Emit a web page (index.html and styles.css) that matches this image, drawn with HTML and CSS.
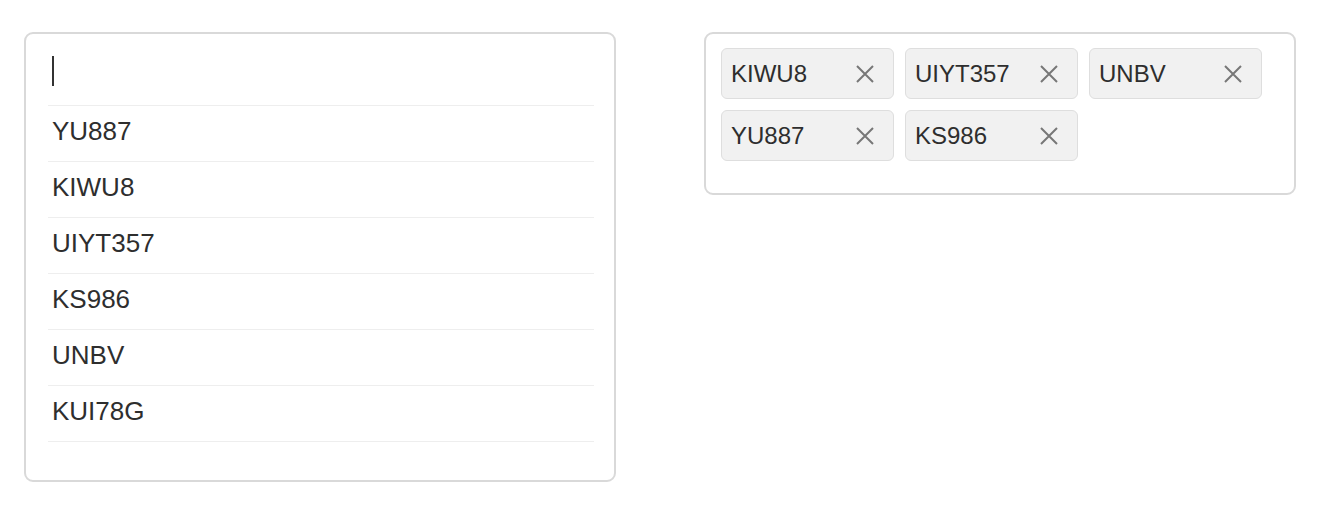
FILE: index.html
```html
<!DOCTYPE html>
<html>
<head>
<meta charset="utf-8">
<link rel="stylesheet" href="styles.css">
</head>
<body>
<div class="page">
  <div class="picker">
    <div class="search"><span class="caret"></span></div>
    <ul class="options">
      <li class="option">YU887</li>
      <li class="option">KIWU8</li>
      <li class="option">UIYT357</li>
      <li class="option">KS986</li>
      <li class="option">UNBV</li>
      <li class="option">KUI78G</li>
    </ul>
  </div>
  <div class="selected">
    <div class="tag"><span class="tag-label">KIWU8</span><span class="tag-close"><svg viewBox="0 0 20 20" width="20" height="20"><path d="M2 2 L18 18 M18 2 L2 18"/></svg></span></div>
    <div class="tag"><span class="tag-label">UIYT357</span><span class="tag-close"><svg viewBox="0 0 20 20" width="20" height="20"><path d="M2 2 L18 18 M18 2 L2 18"/></svg></span></div>
    <div class="tag"><span class="tag-label">UNBV</span><span class="tag-close"><svg viewBox="0 0 20 20" width="20" height="20"><path d="M2 2 L18 18 M18 2 L2 18"/></svg></span></div>
    <div class="tag"><span class="tag-label">YU887</span><span class="tag-close"><svg viewBox="0 0 20 20" width="20" height="20"><path d="M2 2 L18 18 M18 2 L2 18"/></svg></span></div>
    <div class="tag"><span class="tag-label">KS986</span><span class="tag-close"><svg viewBox="0 0 20 20" width="20" height="20"><path d="M2 2 L18 18 M18 2 L2 18"/></svg></span></div>
  </div>
</div>
</body>
</html>
```
FILE: styles.css
```css
html, body {
  margin: 0;
  padding: 0;
  background: #fff;
}
body {
  font-family: "Liberation Sans", Arial, Helvetica, sans-serif;
  color: #333;
}
.page {
  display: flex;
  align-items: flex-start;
  gap: 88px;
  padding: 32px 30px 0 24px;
}
.picker {
  box-sizing: border-box;
  width: 592px;
  height: 450px;
  border: 2px solid #d9d9d9;
  border-radius: 9px;
  padding: 0 20px 0 22px;
}
.search {
  height: 71px;
  display: flex;
  align-items: flex-start;
  padding-left: 4px;
}
.caret {
  display: block;
  width: 2px;
  height: 30px;
  margin-top: 22px;
  background: #333;
}
.options {
  list-style: none;
  margin: 0;
  padding: 0;
  border-top: 1px solid #eeeeee;
}
.option {
  height: 51px;
  line-height: 51px;
  padding: 0 0 4px 4px;
  border-bottom: 1px solid #eeeeee;
  font-size: 26px;
  color: #2e2e2e;
}
.selected {
  box-sizing: border-box;
  width: 592px;
  border: 2px solid #d9d9d9;
  border-radius: 9px;
  padding: 14px 15px 32px 15px;
  display: flex;
  flex-wrap: wrap;
  gap: 11px;
}
.tag {
  box-sizing: border-box;
  width: 173px;
  height: 51px;
  background: #f1f1f1;
  border: 1px solid #dedede;
  border-radius: 6px;
  display: flex;
  align-items: center;
  justify-content: space-between;
  padding: 0 18px 0 9px;
}
.tag-label {
  font-size: 24px;
  color: #2e2e2e;
}
.tag-close {
  display: flex;
  width: 20px;
  height: 20px;
}
.tag-close svg path {
  stroke: #777;
  stroke-width: 2;
  fill: none;
}
```
